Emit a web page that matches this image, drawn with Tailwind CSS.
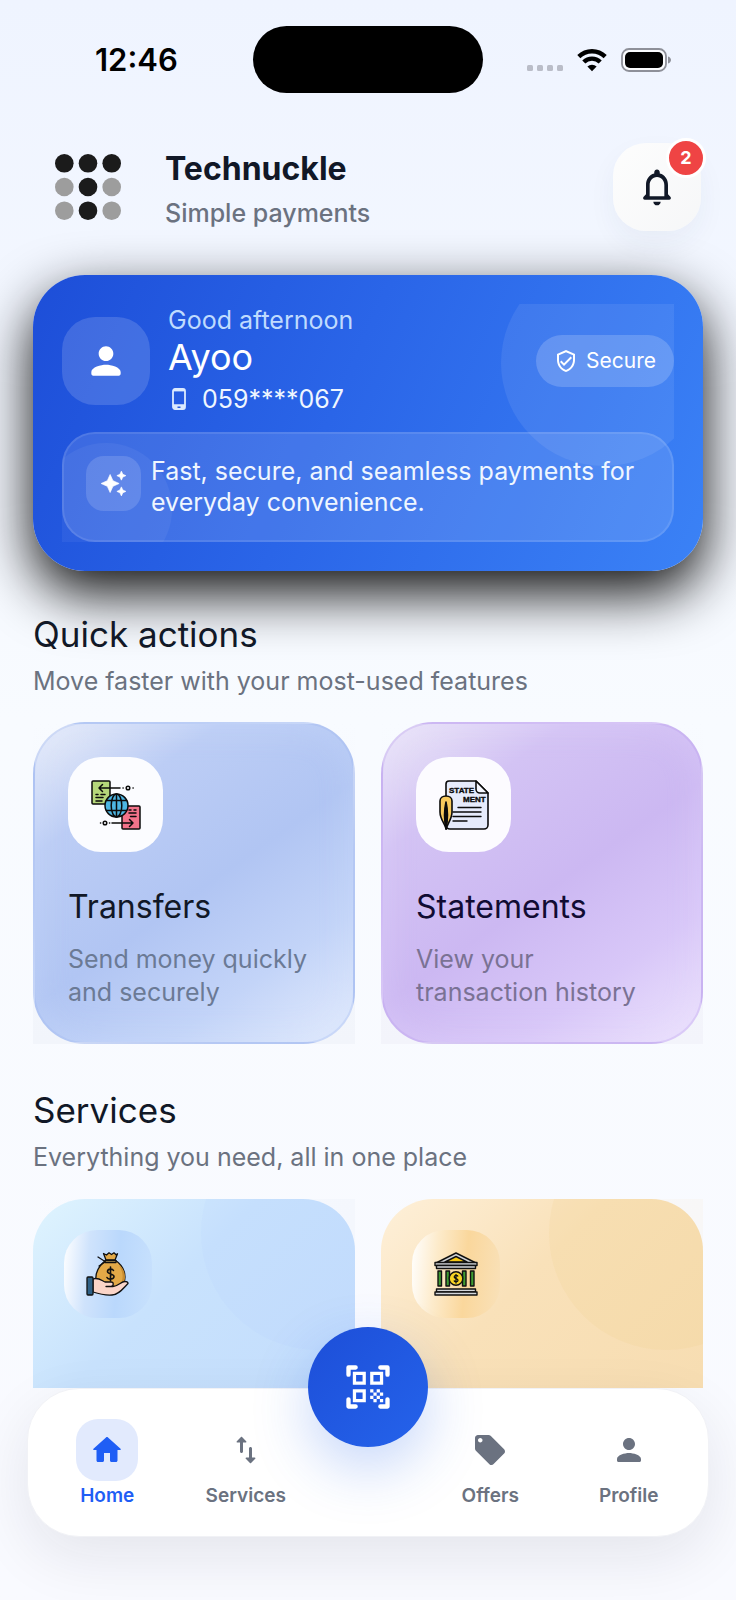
<!DOCTYPE html>
<html lang="en">
<head>
    <meta charset="UTF-8">
    <meta name="viewport" content="width=device-width, initial-scale=1.0">
    <title>Technuckle</title>
    <script src="https://cdn.jsdelivr.net/npm/@tailwindcss/browser@4"></script>
</head>
<body class="bg-[#f8fbff] font-['Inter','Liberation_Sans',sans-serif] text-[#111827]">
    <div class="h-screen flex flex-col overflow-hidden bg-linear-to-b from-[#eff4ff] via-[#f8fbff] via-45% to-[#f9faff]">
        <main class="flex-1 min-h-0 overflow-hidden px-[33px]">
            <!-- Status bar -->
            <div class="mt-[26px] h-[67px] grid grid-cols-[1fr_230px_1fr] items-center">
                <span class="pl-[62px] text-[31px] leading-[40px] font-semibold text-black">12:46</span>
                <span class="h-full rounded-[34px] bg-black"></span>
                <div class="flex items-center justify-end pr-[32px]">
                    <svg class="w-9 h-6 mr-[14px]" viewBox="0 0 36 24" fill="#babdc8">
                        <rect x="0" y="17" width="6" height="6" rx="1.5"/>
                        <rect x="10" y="17" width="6" height="6" rx="1.5"/>
                        <rect x="20" y="17" width="6" height="6" rx="1.5"/>
                        <rect x="30" y="17" width="6" height="6" rx="1.5"/>
                    </svg>
                    <svg class="w-[30px] h-6 mr-[14px]" viewBox="0 0 30 24" fill="none" stroke="#000" stroke-width="4.4">
                        <path d="M1.8 8.6a18.8 18.8 0 0 1 26.4 0"/>
                        <path d="M6.8 14a11.7 11.7 0 0 1 16.4 0"/>
                        <path d="M15 23.2l-4.6-4.6a6.6 6.6 0 0 1 9.2 0z" fill="#000" stroke="none"/>
                    </svg>
                    <svg class="w-[50px] h-6" viewBox="0 0 50 24">
                        <rect x="1" y="1" width="44" height="22" rx="7" fill="#fff" fill-opacity=".7" stroke="#8e9099" stroke-width="1.8"/>
                        <rect x="4" y="4" width="38" height="16" rx="5"/>
                        <path d="M47 8.5c2 .6 3 2 3 3.5s-1 2.9-3 3.5z" fill="#8e9099"/>
                    </svg>
                </div>
            </div>

            <!-- Header -->
            <header class="mt-[50px] h-[88px] flex items-center">
                <svg class="ml-[22px] w-[66px] h-[66px]" viewBox="0 0 66 66" fill="#1b1b1b">
                    <circle cx="9.3" cy="9.3" r="9.3"/>
                    <circle cx="33" cy="9.3" r="9.3"/>
                    <circle cx="56.7" cy="9.3" r="9.3"/>
                    <circle cx="9.3" cy="33" r="9.3" fill="#9d9d9d"/>
                    <circle cx="33" cy="33" r="9.3"/>
                    <circle cx="56.7" cy="33" r="9.3" fill="#9d9d9d"/>
                    <circle cx="9.3" cy="56.7" r="9.3" fill="#9d9d9d"/>
                    <circle cx="33" cy="56.7" r="9.3"/>
                    <circle cx="56.7" cy="56.7" r="9.3" fill="#9d9d9d"/>
                </svg>
                <div class="ml-11 flex-1">
                    <h1 class="text-[32px] leading-[52px] font-bold">Technuckle</h1>
                    <p class="text-[25px] leading-[36px] font-medium text-[#6b7280]">Simple payments</p>
                </div>
                <button type="button" aria-label="Notifications" class="relative mr-[2px] w-[88px] h-[88px] rounded-[33px] bg-linear-to-br from-[#fdfdfd] to-[#f6f7f8] flex items-center justify-center shadow-[0_12px_28px_rgba(30,50,100,0.05)]">
                    <svg class="w-11 h-11" viewBox="0 0 24 24" fill="#111827"><path d="M19.29 17.29L18 16v-5c0-3.07-1.63-5.64-4.5-6.32V4c0-.83-.67-1.5-1.5-1.5s-1.5.67-1.5 1.5v.68C7.64 5.36 6 7.92 6 11v5l-1.29 1.29c-.63.63-.19 1.71.7 1.71h13.17c.9 0 1.34-1.08.71-1.71zM16 17H8v-6c0-2.48 1.51-4.5 4-4.5s4 2.02 4 4.5v6zm-4 5c1.1 0 2-.9 2-2h-4c0 1.1.89 2 2 2z"/></svg>
                    <span class="absolute -top-[5px] -right-[5px] w-10 h-10 rounded-full border-3 border-white bg-[#ef4444] text-white text-[18px] leading-[34px] font-bold text-center">2</span>
                </button>
            </header>

            <!-- Greeting card -->
            <section class="mt-11 rounded-[52px] p-[29px] bg-[linear-gradient(114deg,#1d4ed8_0%,#2a65e8_45%,#3b82f6_100%)] shadow-[0_22px_56px_rgba(0,0,0,0.95)]">
                <div class="relative">
                    <div class="absolute inset-0 overflow-hidden">
                        <div class="absolute -top-[44px] -right-[33px] w-[206px] h-[206px] rounded-full bg-white/8"></div>
                        <div class="absolute -bottom-[33px] -left-[22px] w-[132px] h-[132px] rounded-full bg-white/5"></div>
                    </div>
                    <div class="relative flex items-center">
                        <div class="w-[88px] h-[88px] rounded-[33px] bg-white/15 flex items-center justify-center">
                            <svg class="w-11 h-11" viewBox="0 0 24 24" fill="#fff"><path d="M12 12c2.21 0 4-1.79 4-4s-1.79-4-4-4-4 1.79-4 4 1.79 4 4 4zm0 2c-2.67 0-8 1.34-8 4v1c0 .55.45 1 1 1h14c.55 0 1-.45 1-1v-1c0-2.66-5.33-4-8-4z"/></svg>
                        </div>
                        <div class="ml-[18px] flex-1">
                            <p class="text-[25px] leading-[32px] text-[#bfdbfe]">Good afternoon</p>
                            <p class="text-[36px] leading-[42px] text-white">Ayoo</p>
                            <p class="pt-[3px] flex items-center text-[25px] leading-[36px] text-[#eff6ff]">
                                <svg class="ml-1 mr-4 w-[14px] h-[22px]" viewBox="0 0 14 22" fill="none" stroke="#dbeafe">
                                    <rect x="1" y="1" width="12" height="20" rx="2" stroke-width="1.8"/>
                                    <path d="M1 2.2h12" stroke-width="2.4"/>
                                    <path d="M1 19h4.5M8.5 19h4.5M1 17.3h12" stroke-width="2.2"/>
                                </svg>
                                059****067
                            </p>
                        </div>
                        <div class="h-[52px] rounded-full bg-white/18 px-[18px] flex items-center gap-2 text-[21px] leading-[28px] text-white">
                            <svg class="w-6 h-6" viewBox="0 0 24 24" fill="#fff"><path d="M12 1L3 5v6c0 5.55 3.84 10.74 9 12 5.16-1.26 9-6.45 9-12V5l-9-4zm7 10c0 4.52-2.98 8.69-7 9.93-4.02-1.24-7-5.41-7-9.93V6.3l7-3.11 7 3.11V11zm-11.59.59L6 13l4 4 8-8-1.41-1.42L10 14.17z"/></svg>
                            Secure
                        </div>
                    </div>
                    <div class="relative mt-[15px] rounded-[33px] border-2 border-white/10 bg-white/12 p-[22px] flex items-start gap-[10px]">
                        <div class="w-[55px] h-[55px] shrink-0 rounded-[18px] bg-white/14 flex items-center justify-center">
                            <svg class="w-[27px] h-[27px]" viewBox="0 0 24 24" fill="#fff" stroke="#fff" stroke-width=".6" stroke-linejoin="round"><path d="M19 9l1.25-2.75L23 5l-2.75-1.25L19 1l-1.25 2.75L15 5l2.75 1.25L19 9zm-7.5.5L9 4 6.5 9.5 1 12l5.5 2.5L9 20l2.5-5.5L17 12l-5.5-2.5zM19 15l-1.25 2.75L15 19l2.75 1.25L19 23l1.25-2.75L23 19l-2.75-1.25L19 15z"/></svg>
                        </div>
                        <p class="text-[25px] leading-[31px] text-[#eff6ff]">Fast, secure, and seamless payments for everyday convenience.</p>
                    </div>
                </div>
            </section>

            <!-- Quick actions -->
            <section class="mt-[41px]">
                <h2 class="text-[35px] leading-[44px]">Quick actions</h2>
                <p class="mt-[9px] text-[25px] leading-[32px] text-[#6b7280]">Move faster with your most-used features</p>
                <div class="mt-[25px] grid grid-cols-2 gap-[26px]">
                    <div class="bg-linear-to-b from-transparent to-[#f2f5fb]">
                        <a href="#transfers" class="block h-full rounded-[52px] border-2 border-[#a9c0f2]/40 p-[33px] bg-[linear-gradient(145deg,#eceff9_0%,#bccdf5_24%,#b1c5f3_52%,#c3d4f8_76%,#e4ecfd_100%)] shadow-[inset_0_0_36px_rgba(210,225,255,0.3)]">
                            <span class="w-[95px] h-[95px] rounded-[33px] bg-[#fbfcff] flex items-center justify-center">
                                <svg class="w-[50px] h-[50px]" viewBox="0 0 50 50" fill="none" stroke="#0b0b0b" stroke-width="1.5" stroke-linejoin="round" stroke-linecap="round">
                                    <rect x="1" y="1" width="18" height="23" rx="1" fill="#b5d77a"/>
                                    <rect x="31" y="26" width="18" height="23" rx="1" fill="#f2738a"/>
                                    <path d="M29 8H8M11.5 4.500L8 8l3.500 3.500M32 8h.2M42 8h.2"/>
                                    <circle cx="37" cy="8" r="1.8"/>
                                    <path d="M5 14.5h2M10 14.5h4M5 17.5h7M5 21h6"/>
                                    <path d="M21 43h21M38.5 39.5L42 43l-3.5 3.5M9.5 43h.2M18.5 43h.2"/>
                                    <circle cx="14" cy="43" r="1.8"/>
                                    <path d="M38 30h2M43 30h2M38 33h7M39.5 36.5H45"/>
                                    <circle cx="25.5" cy="25.5" r="11.5" fill="#4db6e2"/>
                                    <ellipse cx="25.5" cy="25.5" rx="5.3" ry="11.5"/>
                                    <path d="M25.5 14v23M15.5 20.5h20M15.5 30.5h20"/>
                                </svg>
                            </span>
                            <span class="mt-[35px] block text-[32px] leading-[40px]">Transfers</span>
                            <span class="mt-4 block text-[25px] leading-[33px] text-[#6b7a95]">Send money quickly<br>and securely</span>
                        </a>
                    </div>
                    <div class="bg-linear-to-b from-transparent to-[#f3f4fb]">
                        <a href="#statements" class="block h-full rounded-[52px] border-2 border-[#c3a9ef]/40 p-[33px] bg-[linear-gradient(145deg,#ece9f8_0%,#d3c3f4_24%,#ccb8f2_52%,#d8c7f8_76%,#ede4fd_100%)] shadow-[inset_0_0_36px_rgba(232,218,255,0.3)]">
                            <span class="w-[95px] h-[95px] rounded-[33px] bg-[#fcfbff] flex items-center justify-center">
                                <svg class="w-[50px] h-[50px]" viewBox="0 0 50 50" fill="none" stroke="#0b0b0b" stroke-width="1.6" stroke-linejoin="round" stroke-linecap="round">
                                    <path d="M10 1h27l12 12v32a4 4 0 0 1-4 4H11a4 4 0 0 1-4-4V4a3 3 0 0 1 3-3z" fill="#e6ebfb"/>
                                    <path d="M37 1v8a4 4 0 0 0 4 4h8z" fill="#f6f8ff"/>
                                    <path d="M19 27.5h23M14 32h28M14 36.5h28M14 41h14" stroke-width="1.4"/>
                                    <path d="M7 49c0-4-6-9-6-17V21c0-3 2.5-5 6-5s6 2 6 5v11c0 8-5.5 12-5.5 17z" fill="#f7c95c"/>
                                    <path d="M7 22c-1.6 7-2.5 15 0 27 2.5-12 1.6-20 0-27z" fill="#0b0b0b"/>
                                    <g fill="#0b0b0b" stroke-width=".4" class="font-['Liberation_Sans',sans-serif] text-[8px] font-bold">
                                        <text x="10" y="13">STATE</text>
                                        <text x="24" y="22">MENT</text>
                                    </g>
                                </svg>
                            </span>
                            <span class="mt-[35px] block text-[32px] leading-[40px] text-[#110c33]">Statements</span>
                            <span class="mt-4 block text-[25px] leading-[33px] text-[#7a7294]">View your<br>transaction history</span>
                        </a>
                    </div>
                </div>
            </section>

            <!-- Services -->
            <section class="mt-11">
                <h2 class="text-[35px] leading-[44px]">Services</h2>
                <p class="mt-[9px] text-[25px] leading-[32px] text-[#6b7280]">Everything you need, all in one place</p>
                <div class="mt-[26px] grid grid-cols-2 gap-[26px]">
                    <a href="#loans" aria-label="Loans" class="aspect-square bg-linear-to-r from-transparent to-[#f4f7fd]">
                        <span class="relative block h-full overflow-hidden rounded-t-[52px] p-[31px] bg-linear-to-br from-[#dff4fe] via-[#c8e2fd] via-35% to-[#c2dbfc]">
                            <span class="absolute -top-[83px] -right-[80px] w-[234px] h-[234px] rounded-full bg-[#93b5fd]/6"></span>
                            <span class="relative w-[88px] h-[88px] rounded-[33px] bg-[linear-gradient(95deg,#ffffff_0%,#cfe3fc_28%,#bad8fc_60%,#c8e1fd_100%)] flex items-center justify-center">
                                <svg class="w-11 h-11" viewBox="0 0 44 44" fill="none" stroke="#111" stroke-width="1.3" stroke-linejoin="round" stroke-linecap="round">
                                    <path d="M20 8c-6 5-11 12-10 20 1 6 8 8 15 8s14-3 14-11c0-7-4-13-10-17z" fill="#e3a947"/>
                                    <path d="M33 13c5 8 5 17-1 22 5-1 7-5 7-10 0-5-2-9-6-12z" fill="#c98c2f" stroke="none"/>
                                    <path d="M20 8l-2.5-6.5 3 1.5L23 .8l2.500 1.700L28 .8l2 2 1.500-1L29 8z" fill="#e3a947"/>
                                    <path d="M19 8.5h11v2H19z" fill="#f7cf73"/>
                                    <path d="M19 9.5l-7-4.5M19 10l-6 4"/>
                                    <path d="M27.500 18.500c-1-2-6-2-6 1s6.500 2 6.500 5-6 3.500-7 1M24.500 15v14" stroke-width="1.6"/>
                                    <path d="M7 27c5-2 8 1 12 3h6c3 0 3 4 0 4.500h-5 7c5 0 8-5 12-5 2 0 3 1 3 2-5 5-9 11-16 11.500-7 .5-13-1-19-3z" fill="#fbd5c8"/>
                                    <rect x="1" y="25" width="6" height="18" rx="1" fill="#2f6187"/>
                                </svg>
                            </span>
                        </span>
                    </a>
                    <a href="#banking" aria-label="Banking" class="aspect-square bg-linear-to-r from-transparent to-[#f8f7f7]">
                        <span class="relative block h-full overflow-hidden rounded-t-[52px] p-[31px] bg-linear-to-br from-[#fef0d9] via-[#f9e1b9] via-35% to-[#f6dbae]">
                            <span class="absolute -top-[83px] -right-[80px] w-[234px] h-[234px] rounded-full bg-[#f0c070]/10"></span>
                            <span class="relative w-[88px] h-[88px] rounded-[33px] bg-[linear-gradient(95deg,#ffffff_0%,#fdebcb_28%,#fad79c_60%,#f9e1b9_100%)] flex items-center justify-center">
                                <svg class="w-11 h-11" viewBox="0 0 44 44" fill="none" stroke="#111" stroke-width="1.4" stroke-linejoin="round">
                                    <path d="M2 11L22 1l20 10z" fill="#d3d6da"/>
                                    <path d="M11 10l11-5.5L33 10z" fill="#f6c915"/>
                                    <rect x="1" y="10.5" width="42" height="3" fill="#d3d6da"/>
                                    <rect x="2.5" y="13.5" width="39" height="3" fill="#d3d6da"/>
                                    <rect x="4" y="19" width="3.5" height="15" fill="#3e9a32"/>
                                    <rect x="12" y="19" width="3.5" height="15" fill="#3e9a32"/>
                                    <rect x="28.5" y="19" width="3.5" height="15" fill="#3e9a32"/>
                                    <rect x="36.5" y="19" width="3.5" height="15" fill="#3e9a32"/>
                                    <circle cx="22" cy="26.5" r="6.8" fill="#f8d324"/>
                                    <path d="M24 24.5c-.6-1.5-3.8-1.5-3.8.5s3.8 1.2 3.8 3.2-3.5 2-4 .3M22 22v9.5" stroke-width="1.3"/>
                                    <rect x="2.5" y="37" width="39" height="3" fill="#d3d6da"/>
                                    <rect x="1" y="40" width="42" height="3" fill="#d3d6da"/>
                                </svg>
                            </span>
                        </span>
                    </a>
                </div>
            </section>
        </main>

        <!-- Bottom navigation -->
        <nav class="relative mx-[27px] mb-[63px] rounded-[52px] bg-white border border-[#f1f2f6] px-[10px] pt-[30px] pb-[25px] flex shadow-[0_20px_60px_rgba(17,24,39,0.09)]">
            <a href="#home" class="flex-1 flex flex-col items-center text-[#1f5ef5]">
                <span class="w-[62px] h-[62px] rounded-[22px] bg-[#e2eafd] flex items-center justify-center">
                    <svg class="w-9 h-9" viewBox="0 0 24 24" fill="currentColor"><path d="M10 19v-5h4v5c0 .55.45 1 1 1h3c.55 0 1-.45 1-1v-7h1.7c.46 0 .68-.57.33-.87L12.67 3.6c-.38-.34-.96-.34-1.34 0l-8.36 7.53c-.34.3-.13.87.33.87H5v7c0 .55.45 1 1 1h3c.55 0 1-.45 1-1z"/></svg>
                </span>
                <span class="text-[19px] leading-[30px] font-semibold">Home</span>
            </a>
            <a href="#services" class="flex-1 flex flex-col items-center text-[#6b7280]">
                <span class="w-[62px] h-[62px] flex items-center justify-center">
                    <svg class="w-9 h-9" viewBox="0 0 24 24" fill="currentColor"><path d="M16 17.01V11c0-.55-.45-1-1-1s-1 .45-1 1v6.01h-1.79c-.45 0-.67.54-.35.85l2.79 2.78c.2.19.51.19.71 0l2.79-2.78c.32-.31.09-.85-.35-.85H16zM8.65 3.35L5.86 6.14c-.32.31-.1.85.35.85H8V13c0 .55.45 1 1 1s1-.45 1-1V6.99h1.79c.45 0 .67-.54.35-.85L9.35 3.35c-.19-.19-.51-.19-.7 0z"/></svg>
                </span>
                <span class="text-[19px] leading-[30px] font-semibold">Services</span>
            </a>
            <div class="w-[106px]"></div>
            <a href="#offers" class="flex-1 flex flex-col items-center text-[#6b7280]">
                <span class="w-[62px] h-[62px] flex items-center justify-center">
                    <svg class="w-9 h-9" viewBox="0 0 24 24" fill="currentColor"><path d="M21.41 11.58l-9-9C12.05 2.22 11.55 2 11 2H4c-1.1 0-2 .9-2 2v7c0 .55.22 1.05.59 1.42l9 9c.36.36.86.58 1.41.58s1.05-.22 1.41-.59l7-7c.37-.36.59-.86.59-1.41s-.23-1.06-.59-1.42zM5.5 7C4.67 7 4 6.33 4 5.5S4.67 4 5.5 4 7 4.67 7 5.5 6.33 7 5.5 7z"/></svg>
                </span>
                <span class="text-[19px] leading-[30px] font-semibold">Offers</span>
            </a>
            <a href="#profile" class="flex-1 flex flex-col items-center text-[#6b7280]">
                <span class="w-[62px] h-[62px] flex items-center justify-center">
                    <svg class="w-9 h-9" viewBox="0 0 24 24" fill="currentColor"><path d="M12 12c2.21 0 4-1.79 4-4s-1.79-4-4-4-4 1.79-4 4 1.79 4 4 4zm0 2c-2.67 0-8 1.34-8 4v1c0 .55.45 1 1 1h14c.55 0 1-.45 1-1v-1c0-2.66-5.33-4-8-4z"/></svg>
                </span>
                <span class="text-[19px] leading-[30px] font-semibold">Profile</span>
            </a>
            <button type="button" aria-label="Scan QR code" class="absolute left-1/2 -top-[62px] -translate-x-1/2 w-[120px] h-[120px] rounded-full bg-linear-to-br from-[#1d4ed8] to-[#2563eb] flex items-center justify-center shadow-[0_22px_56px_rgba(37,99,235,0.25)]">
                <svg class="w-[52px] h-[52px]" viewBox="0 0 24 24" fill="#fff"><path d="M9.5 6.5v3h-3v-3h3M11 5H5v6h6V5zm-1.5 9.5v3h-3v-3h3M11 13H5v6h6v-6zm6.5-6.5v3h-3v-3h3M19 5h-6v6h6V5zm-6 8h1.5v1.5H13V13zm1.5 1.5H16V16h-1.5v-1.5zM16 13h1.5v1.5H16V13zm-3 3h1.5v1.5H13V16zm1.5 1.5H16V19h-1.5v-1.5zM16 16h1.5v1.5H16V16zm1.5-1.5H19V16h-1.5v-1.5zm0 3H19V19h-1.5v-1.5z"/><path d="M3 6.3V3h3.3M17.7 3H21v3.3M21 17.7V21h-3.3M6.3 21H3v-3.3" fill="none" stroke="#fff" stroke-width="2" stroke-linecap="round" stroke-linejoin="round"/></svg>
            </button>
        </nav>
    </div>
</body>
</html>
